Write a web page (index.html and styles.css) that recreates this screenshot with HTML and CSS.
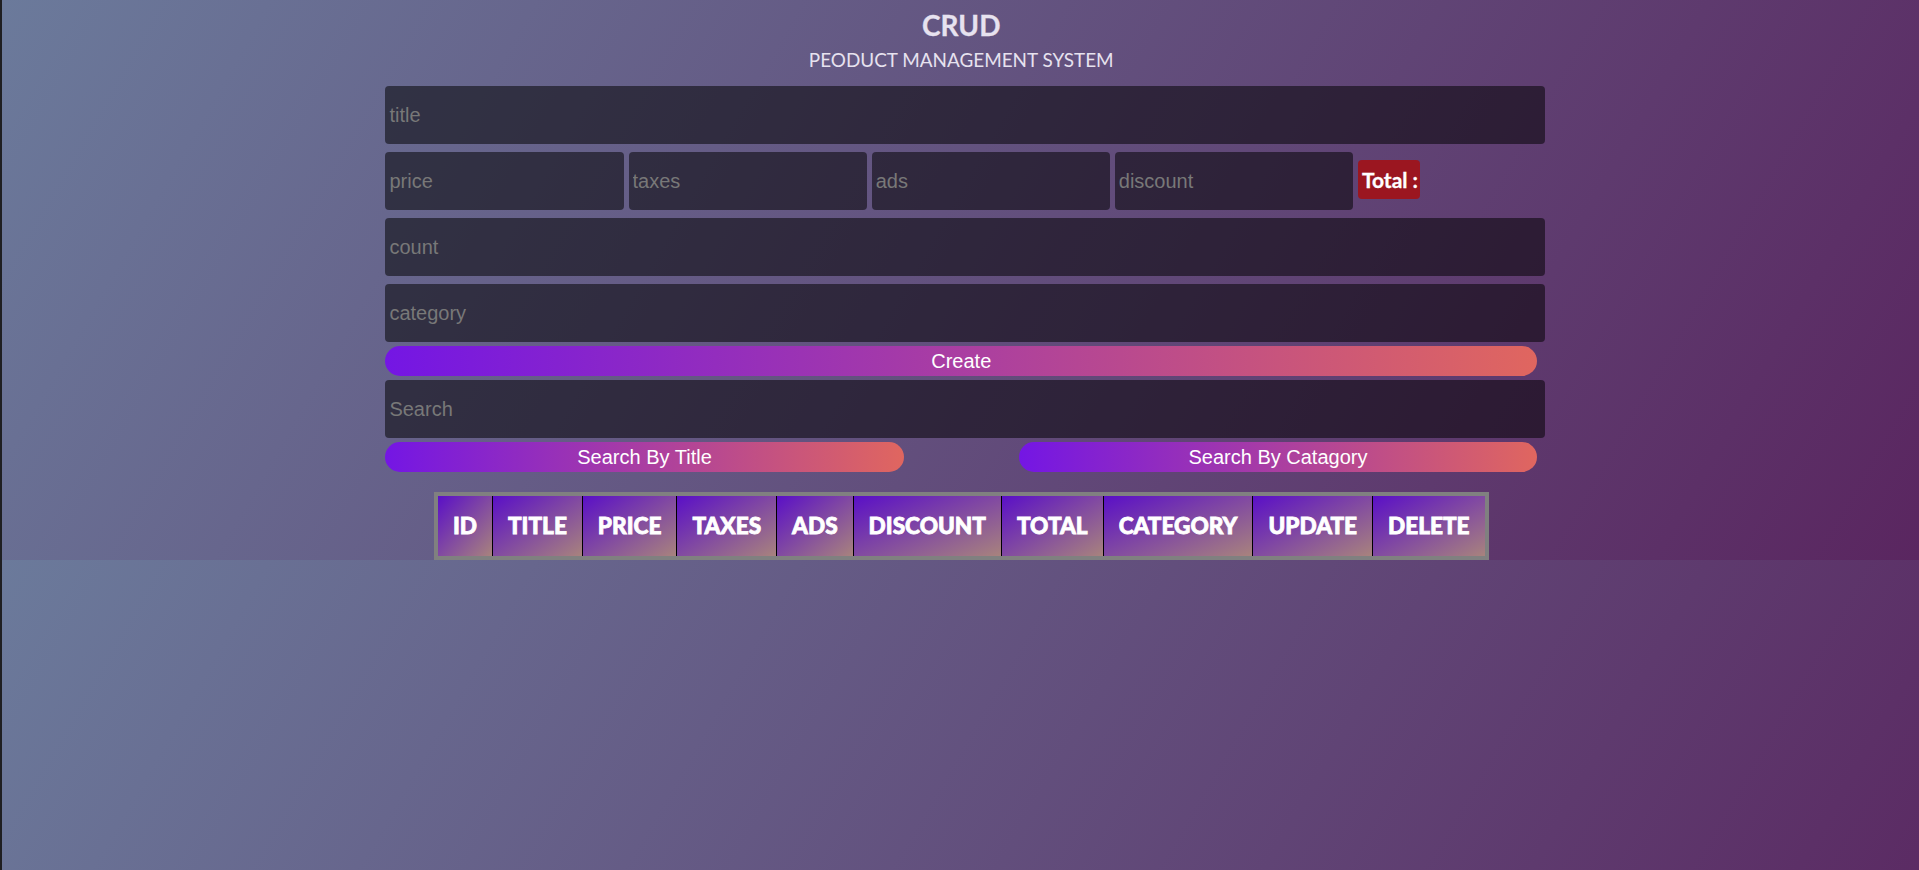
FILE: index.html
```html
<!DOCTYPE html>
<html lang="en">
<head>
<meta charset="UTF-8">
<title>CRUD</title>
<link rel="stylesheet" href="styles.css">
</head>
<body>
<div class="crud">
  <div class="head">
    <h1 class="title">CRUD</h1>
    <p class="subtitle">PEODUCT MANAGEMENT SYSTEM</p>
  </div>
  <div class="inputs">
    <input class="field" type="text" placeholder="title">
    <div class="price">
      <input class="field small" type="number" placeholder="price">
      <input class="field small" type="number" placeholder="taxes">
      <input class="field small" type="number" placeholder="ads">
      <input class="field small" type="number" placeholder="discount">
      <small class="total">Total :</small>
    </div>
    <input class="field" type="number" placeholder="count">
    <input class="field" type="text" placeholder="category">
    <button class="btn">Create</button>
    <input class="field" type="text" placeholder="Search">
    <div class="btn-row">
      <button class="btn half">Search By Title</button>
      <button class="btn half">Search By Catagory</button>
    </div>
  </div>
  <table class="outputs">
    <thead>
      <tr>
        <th>ID</th>
        <th>TITLE</th>
        <th>PRICE</th>
        <th>TAXES</th>
        <th>ADS</th>
        <th>DISCOUNT</th>
        <th>TOTAL</th>
        <th>CATEGORY</th>
        <th>UPDATE</th>
        <th>DELETE</th>
      </tr>
    </thead>
    <tbody></tbody>
  </table>
</div>
</body>
</html>
```
FILE: styles.css
```css
html {
  background: #1f1f22;
}

body {
  margin: 0 0 0 2px;
  min-height: 100vh;
  background: linear-gradient(120deg, #6b7a9b, #5a2660) 0 0 / 100% 560px repeat;
  font-family: "Liberation Sans", Arial, sans-serif;
}

.crud {
  width: calc(60% + 1.5px);
  margin: 0 auto;
  padding-left: 1.5px;
}

.head {
  text-align: center;
  color: #e7e2ef;
  font-family: Lato, "Open Sans", sans-serif;
}

.title {
  margin: 8px 0 0;
  font-size: 28px;
  line-height: 34px;
  font-weight: 700;
  -webkit-text-stroke: 0.3px #e7e2ef;
}

.subtitle {
  margin: 5.5px 0 10.5px;
  font-size: 18.9px;
  line-height: 24px;
  font-weight: 400;
}

.inputs {
  display: flex;
  flex-direction: column;
  align-items: flex-start;
}

.field {
  display: block;
  box-sizing: content-box;
  width: 100%;
  height: 50px;
  padding: 4px;
  margin: 4px 0;
  border: none;
  outline: none;
  border-radius: 4px;
  background: rgba(0, 0, 0, 0.52);
  color: #fff;
  font-family: "Liberation Sans", Arial, sans-serif;
  font-size: 20px;
  flex-shrink: 0;
}

.field::placeholder {
  color: #787878;
}

.field::-webkit-outer-spin-button,
.field::-webkit-inner-spin-button {
  -webkit-appearance: none;
  margin: 0;
}

.price {
  display: flex;
  align-items: center;
  gap: 4.8px;
  width: 100%;
}

.field.small {
  width: 20%;
}

.total {
  display: block;
  margin-bottom: 3px;
  padding: 6px 2px 6px 4px;
  border-radius: 4px;
  background: #9b1620;
  color: #fff;
  font-family: Lato, "Open Sans", sans-serif;
  font-weight: 700;
  font-size: 21px;
  line-height: 27px;
  -webkit-text-stroke: 0.3px #fff;
}

.btn {
  display: block;
  width: 100%;
  height: 30px;
  padding: 0;
  border: none;
  border-radius: 15px;
  background: linear-gradient(to right, #7416e4, #e0665f);
  color: #fff;
  font-family: "Liberation Sans", Arial, sans-serif;
  font-size: 20px;
  line-height: 30px;
  cursor: pointer;
}

.btn-row {
  display: flex;
  justify-content: space-between;
  width: 100%;
}

.btn.half {
  width: 45%;
}

.outputs {
  margin: 20px auto 0;
  border: 4px solid #808080;
  border-spacing: 0;
  text-align: center;
}

.outputs th {
  padding: 15px;
  background: linear-gradient(to bottom right, #5a0fc7, #a8837d);
  color: #fff;
  font-family: Lato, "Open Sans", sans-serif;
  font-weight: 900;
  font-size: 22.6px;
  line-height: 30px;
  -webkit-text-stroke: 0.8px #fff;
}

.outputs th + th {
  border-left: 1px solid #000;
}
```
